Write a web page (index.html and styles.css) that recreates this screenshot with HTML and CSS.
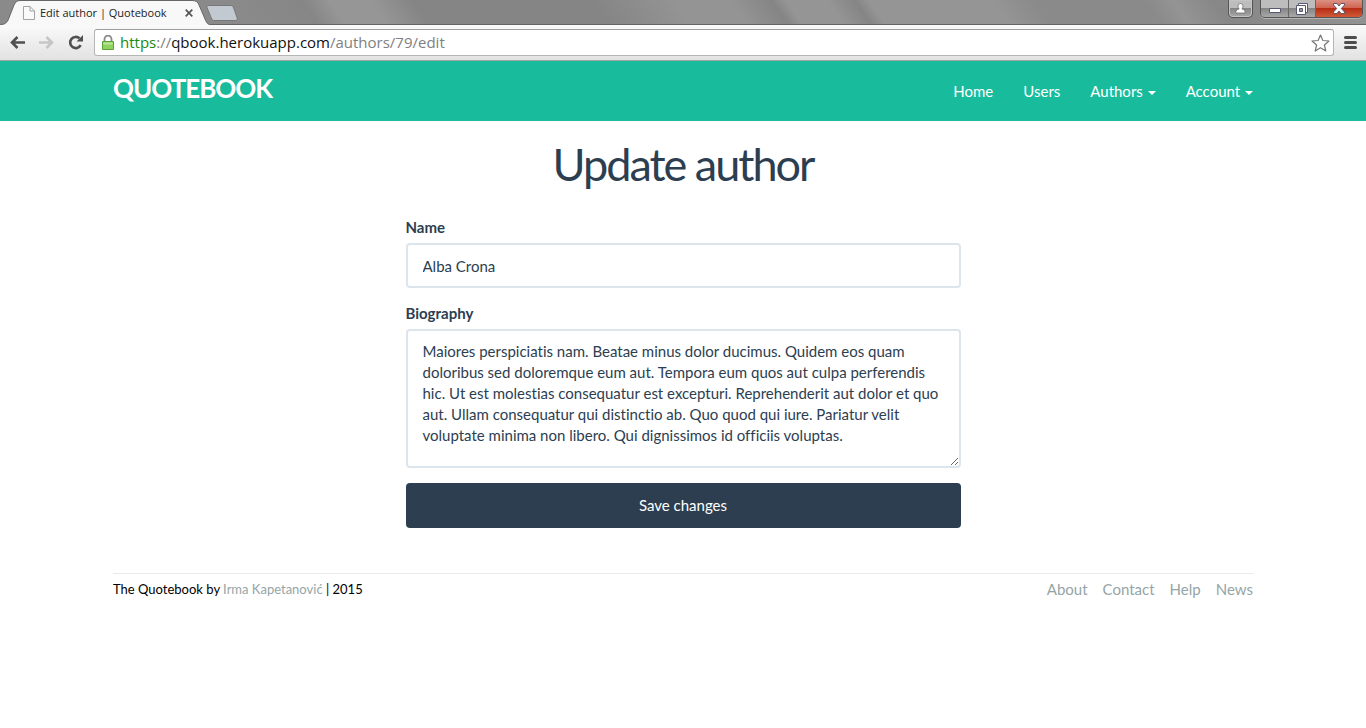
FILE: index.html
```html
<!DOCTYPE html>
<html lang="en">
<head>
<meta charset="utf-8">
<meta name="viewport" content="width=device-width, initial-scale=1">
<title>Edit author | Quotebook</title>
<link rel="stylesheet" href="styles.css">
</head>
<body>
<div class="browser">
  <div class="titlebar">
    <div class="tab">
      <svg class="tab-shape" width="210" height="25" viewBox="0 0 210 25" aria-hidden="true">
        <path d="M0 24.500C5 24.500 7 23 8.500 19L14 5C15.500 2 17 .5 20 .5H192C196 .5 198 2 199 5L205 19C206.500 23 208 24.500 210 24.500V25H0Z" fill="#f8f8f8"/>
        <path d="M0 24.500C5 24.500 7 23 8.500 19L14 5C15.500 2 17 .5 20 .5H192C196 .5 198 2 199 5L205 19C206.500 23 208 24.500 210 24.500" fill="none" stroke="#686666"/>
      </svg>
      <svg class="tab-page" width="12" height="14" viewBox="0 0 12 14" aria-hidden="true"><path d="M.5.5H7L11.500 5V13.500H.5ZM7 .5V5H11.500" fill="#fafafa" stroke="#a3a3a3"/></svg>
      <span class="tab-title">Edit author | Quotebook</span>
      <button class="tab-close" type="button" aria-label="Close tab"><svg width="8" height="8" viewBox="0 0 8 8"><path d="M.7.7 7.300 7.300M7.300.7.7 7.300" stroke="#555" stroke-width="1.700"/></svg></button>
    </div>
    <button class="new-tab" type="button" aria-label="New tab"><svg width="32" height="16" viewBox="0 0 32 16"><path d="M3 .5H24C26 .5 27 1 27.700 3L31 12.500C31.600 14.500 31 15.500 29.500 15.500H9C7 15.500 6 15 5.300 13L1 2.500C.5 1 1.500.5 3 .5Z" fill="#c2c9d0" stroke="#777"/></svg></button>
    <div class="window-controls">
      <button class="win-user" type="button" aria-label="User"><svg width="11" height="11" viewBox="0 0 11 11"><path d="M3 3a2.500 2.500 0 0 1 5 0C8 4.500 7.300 5.500 6.800 6 9 6.300 10.200 7.400 10.200 10H.8C.8 7.400 2 6.300 4.200 6 3.700 5.500 3 4.500 3 3Z" fill="#fff" stroke="#666" stroke-width=".7"/></svg></button>
      <div class="win-group">
        <button class="win-min" type="button" aria-label="Minimize"><svg width="12" height="5" viewBox="0 0 12 5"><path d="M.5.5H11.500V4.500H.5Z" fill="#fff" stroke="#555a72"/></svg></button>
        <button class="win-max" type="button" aria-label="Restore"><svg width="12" height="12" viewBox="0 0 12 12" fill="#fff" stroke="#555a72"><path d="M2.500.5H11.500V9.500H2.500Z"/><path d="M.5 2.500H9.500V11.500H.5Z"/><path d="M3.500 5.500H6.500V8.500H3.500Z" fill="#9a9a9a"/></svg></button>
        <button class="win-close" type="button" aria-label="Close"><svg width="12" height="11" viewBox="0 0 12 11"><path d="M.5.5H4L6 3 8 .5H11.500V2L8.300 5.500 11.500 9V10.500H8L6 8 4 10.500H.5V9L3.700 5.500.5 2Z" fill="#fff" stroke="#5c5468"/></svg></button>
      </div>
    </div>
  </div>
  <div class="toolbar">
    <button class="back" type="button" aria-label="Back"><svg width="15" height="13" viewBox="0 0 15 13"><path d="M15 6.500H2M7.500 1 2 6.500 7.500 12" fill="none" stroke="#505050" stroke-width="2.600"/></svg></button>
    <button class="forward" type="button" aria-label="Forward"><svg width="15" height="13" viewBox="0 0 15 13"><path d="M0 6.500H13M7.500 1 13 6.500 7.500 12" fill="none" stroke="#c6c6c6" stroke-width="2.600"/></svg></button>
    <button class="reload" type="button" aria-label="Reload"><svg width="16" height="15" viewBox="0 0 16 15"><path d="M12.700 10.200A5.600 5.600 0 1 1 11.500 3.300" fill="none" stroke="#505050" stroke-width="2.600"/><path d="M15 0V6.500H8.500Z" fill="#505050"/></svg></button>
    <div class="omnibox">
      <svg width="12" height="15" viewBox="0 0 12 15" aria-hidden="true"><path d="M2.500 7V4A3 3 0 0 1 9.500 4V7" fill="none" stroke="#8b8b8b" stroke-width="1.800"/><path d="M.5 6.500H11.500V14.500H.5Z" fill="#8fd35f" stroke="#5ba339"/><path d="M1.500 7.500H10.500V9.500H1.500Z" fill="#b9e699"/></svg>
      <div class="url"><span class="scheme">https</span>://<span class="host">qbook.herokuapp.com</span>/authors/79/edit</div>
      <button class="star" type="button" aria-label="Bookmark"><svg width="19" height="18" viewBox="0 0 19 18"><path d="M9.500 1 11.900 6.500 18 7 13.400 11 14.800 17 9.500 13.800 4.200 17 5.600 11 1 7 7.100 6.500Z" fill="#fff" stroke="#777" stroke-width="1.200" stroke-linejoin="round"/></svg></button>
    </div>
    <button class="menu" type="button" aria-label="Menu"><svg width="13" height="13" viewBox="0 0 13 13"><path d="M1.500 1.500H11.500M1.500 6.500H11.500M1.500 11.500H11.500" stroke="#4d4d4d" stroke-width="3" stroke-linecap="round"/></svg></button>
  </div>
</div>
<header class="navbar">
  <div class="container navbar-row">
    <a class="logo" href="#">Quotebook</a>
    <nav class="nav">
      <a href="#">Home</a>
      <a href="#">Users</a>
      <a href="#">Authors <b class="caret"></b></a>
      <a href="#">Account <b class="caret"></b></a>
    </nav>
  </div>
</header>
<div class="container">
  <main>
    <h1>Update author</h1>
    <form class="author-form">
      <label for="name">Name</label>
      <input class="field" id="name" type="text" value="Alba Crona">
      <label for="bio">Biography</label>
      <textarea class="field" id="bio" rows="5" spellcheck="false">Maiores perspiciatis nam. Beatae minus dolor ducimus. Quidem eos quam doloribus sed doloremque eum aut. Tempora eum quos aut culpa perferendis hic. Ut est molestias consequatur est excepturi. Reprehenderit aut dolor et quo aut. Ullam consequatur qui distinctio ab. Quo quod qui iure. Pariatur velit voluptate minima non libero. Qui dignissimos id officiis voluptas.</textarea>
      <button class="save" type="button">Save changes</button>
    </form>
  </main>
  <footer class="footer">
    <small>The Quotebook by <a href="#">Irma Kapetanović</a> | 2015</small>
    <nav class="footer-nav">
      <a href="#">About</a>
      <a href="#">Contact</a>
      <a href="#">Help</a>
      <a href="#">News</a>
    </nav>
  </footer>
</div>
</body>
</html>
```
FILE: styles.css
```css
* { box-sizing: border-box; }
body {
  margin: 0;
  background: #fff;
  color: #2c3e50;
  font: 15px/21px Lato, sans-serif;
  font-variant-ligatures: none;
}
a { color: #95a5a6; text-decoration: none; }
button { font: inherit; cursor: pointer; }
svg { display: block; }

.browser { font-family: "Open Sans", sans-serif; }
.browser button { border: 0; padding: 0; background: none; }
.titlebar {
  display: flex;
  align-items: flex-start;
  height: 25px;
  padding-right: 3px;
  border-bottom: 1px solid #686464;
  background: linear-gradient(55deg, #8a8a8a 0 18%, #868686 23%, #969696 25% 28%, #858585 31% 44%, #949494 50% 54%, #858585 57%, #959595 58% 61%, #858585 63%, #959595 64% 73%, #8a8a8a 76% 84%, #949494 86%, #878787 89%, #939393 100%);
}
.tab {
  position: relative;
  display: flex;
  align-items: center;
  width: 203px;
  height: 25px;
  padding-left: 23px;
}
.tab-shape { position: absolute; left: 0; top: 0; }
.tab-page, .tab-title, .tab-close { position: relative; }
.tab-title { flex: 1; margin-left: 5px; color: #222; font-size: 11px; white-space: nowrap; }
.tab-close { margin-right: 10px; }
.new-tab { margin: 5px 0 0 3px; }
.window-controls { display: flex; gap: 7px; margin-left: auto; }
.window-controls button {
  display: flex;
  align-items: center;
  justify-content: center;
  height: 17px;
  background: linear-gradient(#bdbdbd 0 50%, #858585 50%, #a9a9a9);
}
.window-controls .win-user {
  width: 25px;
  height: 18px;
  border: 1px solid #555;
  border-top: 0;
  border-radius: 0 0 5px 5px;
  box-shadow: inset 0 0 0 1px #c4c4c4;
}
.win-group {
  display: flex;
  overflow: hidden;
  border: 1px solid #555;
  border-top: 0;
  border-radius: 0 0 5px 5px;
  box-shadow: 0 1px 0 #b5b5b5;
}
.window-controls .win-min { width: 28px; border-right: 1px solid #666; padding-top: 4px; }
.window-controls .win-max { width: 27px; border-right: 1px solid #666; }
.window-controls .win-close { width: 46px; background: linear-gradient(#dc9184 0, #d0604b 50%, #b72e14 50%, #d05a38); }

.toolbar {
  display: flex;
  align-items: center;
  height: 36px;
  padding: 0 9px 0 10px;
  border-bottom: 1px solid #a5a5a5;
  background: linear-gradient(#fafafa, #e2e2e2);
}
.forward, .reload { margin-left: 14px; }
.omnibox {
  display: flex;
  flex: 1;
  align-items: center;
  height: 27px;
  margin: 0 10px;
  padding: 0 3px 0 7px;
  border: 1px solid #b5b5b5;
  border-top-color: #9e9e9e;
  border-radius: 3px;
  background: #fff;
}
.url { flex: 1; margin-left: 6px; color: #808080; font-size: 15px; }
.scheme { color: #178a17; }
.host { color: #111; }

.container { max-width: 1170px; margin: 0 auto; padding: 0 15px; }
.navbar { background: #18bc9c; }
.navbar-row { display: flex; justify-content: space-between; height: 60px; }
.logo {
  padding-top: 9px;
  color: #fff;
  font-size: 26px;
  font-weight: 700;
  line-height: 36px;
  letter-spacing: -1px;
  text-transform: uppercase;
}
.nav { display: flex; gap: 30px; align-items: center; }
.nav a { color: #fff; }
.caret {
  display: inline-block;
  margin-left: 1px;
  vertical-align: middle;
  border: 4px solid transparent;
  border-top-color: #fff;
  border-bottom: 0;
}

h1 {
  margin: 18px 0 28px;
  font-size: 45px;
  font-weight: 400;
  line-height: 50px;
  letter-spacing: -2px;
  text-align: center;
}
.author-form { display: flex; flex-direction: column; max-width: 555px; margin: 0 auto; }
.author-form label { margin-bottom: 5px; font-weight: 700; }
.field {
  width: 100%;
  margin: 0 0 15px;
  padding: 10px 15px;
  border: 2px solid #dce4ec;
  border-radius: 4px;
  background: #fff;
  color: #2c3e50;
  font: inherit;
  font-variant-ligatures: none;
}
input.field { height: 45px; }
textarea.field { height: 139px; resize: vertical; }
.save {
  height: 45px;
  border: 0;
  border-radius: 4px;
  background: #2c3e50;
  color: #fff;
}
.footer {
  display: flex;
  justify-content: space-between;
  margin-top: 45px;
  padding-top: 5px;
  border-top: 1px solid #eaeaea;
}
.footer small { color: #000; font-size: 13px; line-height: 20px; }
.footer-nav { display: flex; gap: 15px; }
```
